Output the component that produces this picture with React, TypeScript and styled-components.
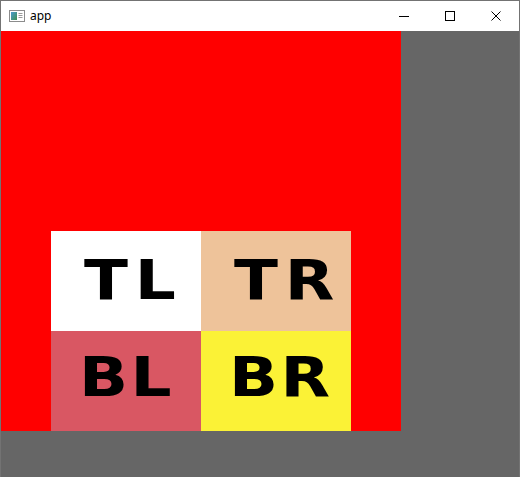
import React from "react";
import styled, { createGlobalStyle } from "styled-components";

const Global = createGlobalStyle`
  html, body { margin: 0; padding: 0; background: #666666; }
  body { width: 520px; height: 477px; overflow: hidden; }
`;

const Frame = styled.div`
  box-sizing: border-box;
  width: 520px;
  height: 477px;
  border: 1px solid #737373;
  border-bottom: none;
  background: #666666;
  display: flex;
  flex-direction: column;
`;

const TitleBar = styled.div`
  height: 30px;
  flex: none;
  background: #ffffff;
  display: flex;
  align-items: center;
`;

const TitleIcon = styled.svg`
  margin-left: 8px;
  width: 16px;
  height: 12px;
  flex: none;
`;

const TitleText = styled.span`
  margin-left: 5px;
  font-family: "Noto Sans", "Open Sans", sans-serif;
  font-size: 12px;
  color: #000000;
  flex: 1;
  line-height: 16px;
  padding-bottom: 1px;
`;

const CtrlButton = styled.div`
  width: 46px;
  height: 30px;
  display: flex;
  align-items: center;
  justify-content: center;
`;

const Client = styled.div`
  flex: 1;
  display: flex;
  align-items: flex-start;
`;

const Canvas = styled.div`
  width: 400px;
  height: 400px;
  background: #ff0000;
  display: flex;
  flex-direction: column;
  justify-content: flex-end;
  align-items: center;
`;

const Grid = styled.div`
  display: grid;
  grid-template-columns: 150px 150px;
  grid-template-rows: 100px 100px;
`;

const Cell = styled.div<{ $bg: string; $top: number; $left: number }>`
  box-sizing: border-box;
  background: ${(p) => p.$bg};
  padding-top: ${(p) => p.$top}px;
  padding-left: ${(p) => p.$left}px;
  overflow: hidden;
`;

const Label = styled.span<{ $ls: number }>`
  display: inline-block;
  font-family: "DejaVu Sans", sans-serif;
  font-weight: bold;
  font-size: 56px;
  line-height: 1;
  color: #000000;
  letter-spacing: ${(p) => p.$ls}px;
  transform: scaleX(1.15);
  transform-origin: left center;
`;

const cells = [
  { text: "TL", bg: "#ffffff", top: 21, left: 33, ls: 6 },
  { text: "TR", bg: "#eec39a", top: 21, left: 33, ls: 6 },
  { text: "BL", bg: "#d95763", top: 18, left: 28, ls: 2 },
  { text: "BR", bg: "#fbf236", top: 18, left: 28, ls: 2 },
];

export default function App() {
  return (
    <>
      <Global />
      <Frame>
        <TitleBar>
          <TitleIcon viewBox="0 0 16 12">
            <defs>
              <linearGradient id="ig" x1="0" y1="0" x2="1" y2="1">
                <stop offset="0" stopColor="#4a9bd0" />
                <stop offset="1" stopColor="#3f8f4f" />
              </linearGradient>
            </defs>
            <rect x="0.5" y="0.5" width="15" height="11" fill="#ffffff" stroke="#8c8c8c" />
            <rect x="2" y="2" width="6" height="8" fill="url(#ig)" />
            <rect x="9.5" y="3" width="4" height="1" fill="#9a9a9a" />
            <rect x="9.5" y="5" width="4" height="1" fill="#9a9a9a" />
            <rect x="9.5" y="7" width="4" height="1" fill="#9a9a9a" />
          </TitleIcon>
          <TitleText>app</TitleText>
          <CtrlButton>
            <svg width="10" height="10" viewBox="0 0 10 10">
              <rect x="0" y="5" width="10" height="1" fill="#000" />
            </svg>
          </CtrlButton>
          <CtrlButton>
            <svg width="10" height="10" viewBox="0 0 10 10">
              <rect x="0.5" y="0.5" width="9" height="9" fill="none" stroke="#000" />
            </svg>
          </CtrlButton>
          <CtrlButton>
            <svg width="10" height="10" viewBox="0 0 10 10">
              <path d="M0.5 0.5 L9.5 9.5 M9.5 0.5 L0.5 9.5" stroke="#000" strokeWidth="1" />
            </svg>
          </CtrlButton>
        </TitleBar>
        <Client>
          <Canvas>
            <Grid>
              {cells.map((c) => (
                <Cell key={c.text} $bg={c.bg} $top={c.top} $left={c.left}>
                  <Label $ls={c.ls}>{c.text}</Label>
                </Cell>
              ))}
            </Grid>
          </Canvas>
        </Client>
      </Frame>
    </>
  );
}
